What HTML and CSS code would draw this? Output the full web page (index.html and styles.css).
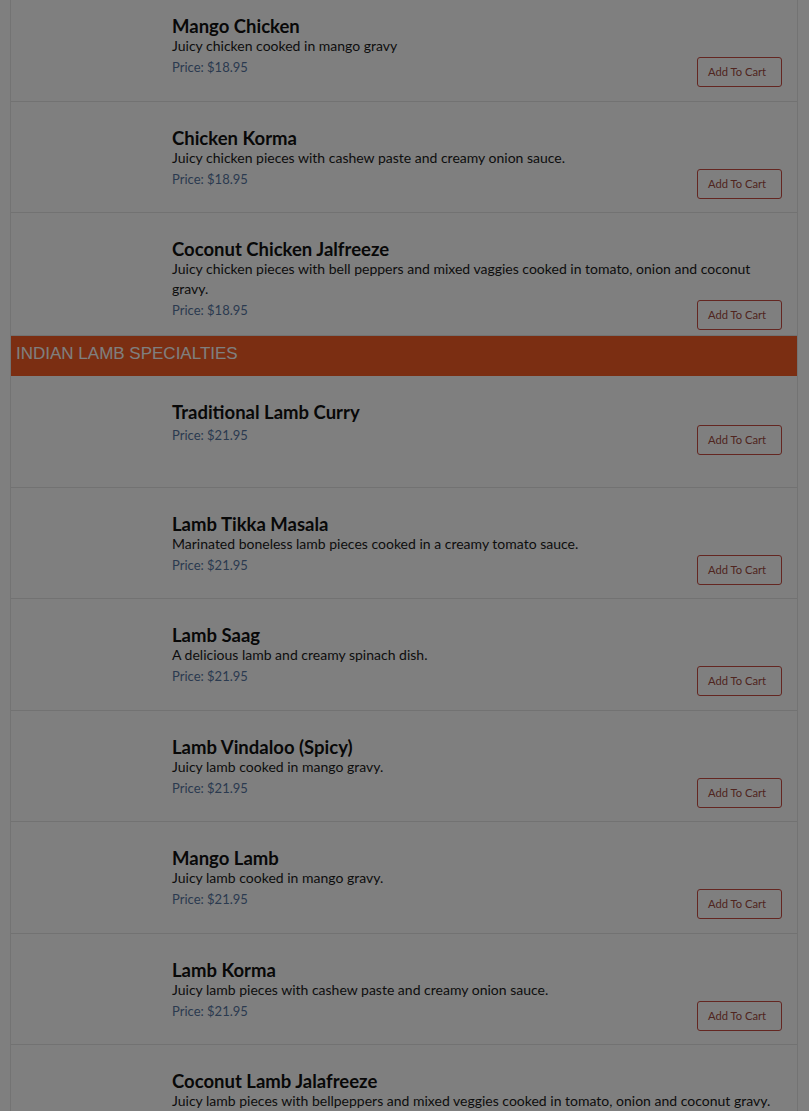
FILE: index.html
```html
<!DOCTYPE html>
<html lang="en">
<head>
<meta charset="utf-8">
<title>Menu</title>
<link rel="stylesheet" href="styles.css">
</head>
<body>
<div class="menu">
  <div class="item">
    <div class="thumb"></div>
    <div class="info">
      <h3 class="name">Mango Chicken</h3>
      <p class="desc">Juicy chicken cooked in mango gravy</p>
      <div class="foot"><span class="price">Price: $18.95</span><button class="cart">Add To Cart</button></div>
    </div>
  </div>
  <div class="item">
    <div class="thumb"></div>
    <div class="info">
      <h3 class="name">Chicken Korma</h3>
      <p class="desc">Juicy chicken pieces with cashew paste and creamy onion sauce.</p>
      <div class="foot"><span class="price">Price: $18.95</span><button class="cart">Add To Cart</button></div>
    </div>
  </div>
  <div class="item">
    <div class="thumb"></div>
    <div class="info">
      <h3 class="name">Coconut Chicken Jalfreeze</h3>
      <p class="desc">Juicy chicken pieces with bell peppers and mixed vaggies cooked in tomato, onion and coconut gravy.</p>
      <div class="foot"><span class="price">Price: $18.95</span><button class="cart">Add To Cart</button></div>
    </div>
  </div>
  <div class="category">INDIAN LAMB SPECIALTIES</div>
  <div class="item">
    <div class="thumb"></div>
    <div class="info">
      <h3 class="name">Traditional Lamb Curry</h3>
      <p class="desc desc-empty"></p>
      <div class="foot"><span class="price">Price: $21.95</span><button class="cart">Add To Cart</button></div>
    </div>
  </div>
  <div class="item">
    <div class="thumb"></div>
    <div class="info">
      <h3 class="name">Lamb Tikka Masala</h3>
      <p class="desc">Marinated boneless lamb pieces cooked in a creamy tomato sauce.</p>
      <div class="foot"><span class="price">Price: $21.95</span><button class="cart">Add To Cart</button></div>
    </div>
  </div>
  <div class="item">
    <div class="thumb"></div>
    <div class="info">
      <h3 class="name">Lamb Saag</h3>
      <p class="desc">A delicious lamb and creamy spinach dish.</p>
      <div class="foot"><span class="price">Price: $21.95</span><button class="cart">Add To Cart</button></div>
    </div>
  </div>
  <div class="item">
    <div class="thumb"></div>
    <div class="info">
      <h3 class="name">Lamb Vindaloo (Spicy)</h3>
      <p class="desc">Juicy lamb cooked in mango gravy.</p>
      <div class="foot"><span class="price">Price: $21.95</span><button class="cart">Add To Cart</button></div>
    </div>
  </div>
  <div class="item">
    <div class="thumb"></div>
    <div class="info">
      <h3 class="name">Mango Lamb</h3>
      <p class="desc">Juicy lamb cooked in mango gravy.</p>
      <div class="foot"><span class="price">Price: $21.95</span><button class="cart">Add To Cart</button></div>
    </div>
  </div>
  <div class="item">
    <div class="thumb"></div>
    <div class="info">
      <h3 class="name">Lamb Korma</h3>
      <p class="desc">Juicy lamb pieces with cashew paste and creamy onion sauce.</p>
      <div class="foot"><span class="price">Price: $21.95</span><button class="cart">Add To Cart</button></div>
    </div>
  </div>
  <div class="item">
    <div class="thumb"></div>
    <div class="info">
      <h3 class="name">Coconut Lamb Jalafreeze</h3>
      <p class="desc">Juicy lamb pieces with bellpeppers and mixed veggies cooked in tomato, onion and coconut gravy.</p>
      <div class="foot"><span class="price">Price: $21.95</span><button class="cart">Add To Cart</button></div>
    </div>
  </div>
</div>
<div class="backdrop"></div>
</body>
</html>
```

FILE: styles.css
```css
html, body {
  margin: 0;
  padding: 0;
  background: #ffffff;
}
body {
  font-family: "Lato", "Liberation Sans", sans-serif;
  color: #222222;
  overflow: hidden;
}
.menu {
  width: 786px;
  margin: -10px 0 0 10px;
  border-left: 1px solid #e6e6e6;
  border-right: 1px solid #e6e6e6;
  background: #ffffff;
}
.item {
  display: flex;
  min-height: 111.5px;
  box-sizing: border-box;
  padding: 27px 15px 5px 15px;
  border-bottom: 1px solid #e4e4e4;
}
.thumb {
  flex: 0 0 146px;
}
.info {
  flex: 1 1 auto;
  min-width: 0;
}
.name {
  margin: 0;
  font-size: 18.5px;
  line-height: 19px;
  font-weight: 700;
  color: #111111;
}
.desc {
  margin: 0;
  font-size: 14px;
  line-height: 20px;
  color: #1a1a1a;
}
.desc-empty {
  height: 2px;
}
.foot {
  display: flex;
  justify-content: space-between;
  align-items: flex-start;
  margin-top: 1px;
}
.price {
  font-size: 13px;
  line-height: 20px;
  color: #56759f;
}
.cart {
  font-family: inherit;
  font-size: 11.2px;
  line-height: 16px;
  height: 30px;
  width: 85px;
  padding: 6px 4px 6px 10px;
  text-align: left;
  border: 1px solid #c84d42;
  border-radius: 3px;
  background: #ffffff;
  color: #a04a40;
}
.category {
  height: 40px;
  box-sizing: border-box;
  padding: 8px 5px 0;
  background: #f65c24;
  color: #ffffff;
  font-family: "Liberation Sans", Arial, sans-serif;
  font-size: 17px;
  line-height: 20px;
}
.backdrop {
  position: fixed;
  inset: 0;
  background: rgba(0, 0, 0, 0.5);
}
```
